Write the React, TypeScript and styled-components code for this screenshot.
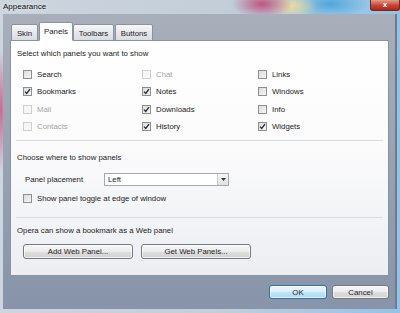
import React from "react";
import styled, { createGlobalStyle } from "styled-components";

const GlobalStyle = createGlobalStyle`
  html, body {
    margin: 0;
    padding: 0;
  }
  body {
    font-family: "Liberation Sans", Arial, sans-serif;
    font-size: 7.8px;
    color: #1b1b1b;
  }
`;

const Desktop = styled.div`
  width: 400px;
  height: 313px;
  overflow: hidden;
  padding-left: 3px;
  box-sizing: border-box;
  background:
    radial-gradient(ellipse 30px 14px at 262px 4px, #c2557e 0%, rgba(194, 85, 126, 0) 100%),
    radial-gradient(ellipse 26px 12px at 292px 6px, #e7dc9c 0%, rgba(231, 220, 156, 0) 100%),
    radial-gradient(ellipse 40px 14px at 330px 4px, #4fa6de 0%, rgba(79, 166, 222, 0) 100%),
    radial-gradient(ellipse 8px 60px at 1px 110px, #c76a8c 0%, rgba(199, 106, 140, 0) 100%),
    linear-gradient(90deg, #cdd5de 0%, #c3ced9 55%, #8fc4e8 100%);
`;

const Dialog = styled.div`
  width: 394px;
  display: flex;
  flex-direction: column;
`;

const TitleBar = styled.div`
  height: 14px;
  display: flex;
  align-items: flex-start;
  justify-content: space-between;
`;

const Title = styled.span`
  font-size: 8px;
  line-height: 13px;
  color: #111;
  text-shadow: 0 0 4px rgba(255, 255, 255, 0.9);
`;

const CloseButton = styled.div`
  width: 28px;
  height: 10px;
  margin-right: -3px;
  border: 1px solid #6b2a22;
  border-top: none;
  border-radius: 0 0 3px 3px;
  background: linear-gradient(#e59a8a, #c8432f 55%, #a9261a);
  display: flex;
  align-items: center;
  justify-content: center;
  color: #fff;
  font-size: 8px;
  font-weight: bold;
  line-height: 1;
`;

const Frame = styled.div`
  height: 295px;
  box-sizing: border-box;
  padding: 9px 6px 0 0;
  background: linear-gradient(#a8afba, #97a2b3 50%, #8794a9);
  border-right: 2px solid #6c7a92;
  display: flex;
  flex-direction: column;
`;

const TabRow = styled.div`
  display: flex;
  align-items: flex-end;
  padding-left: 8px;
  height: 18px;
  margin-bottom: -1px;
  position: relative;
  z-index: 1;
`;

const Tab = styled.div<{ $active?: boolean; $w: number }>`
  box-sizing: border-box;
  width: ${(p) => p.$w}px;
  height: ${(p) => (p.$active ? 19 : 17)}px;
  margin-right: ${(p) => (p.$active ? 0 : 1)}px;
  border: 1px solid #8a93a1;
  border-bottom-color: ${(p) => (p.$active ? "#fff" : "#8a93a1")};
  border-radius: 2px 2px 0 0;
  background: ${(p) =>
    p.$active ? "#fff" : "linear-gradient(#f7f7f7, #e6e8ec 50%, #d9dde3)"};
  display: flex;
  align-items: center;
  justify-content: center;
  padding-top: ${(p) => (p.$active ? 0 : 1)}px;
`;

const Panel = styled.div`
  box-sizing: border-box;
  margin-left: 7px;
  width: 379px;
  height: 236px;
  border: 1px solid #8a93a1;
  background: linear-gradient(#ffffff 0%, #fbfbfc 45%, #eceef2 100%);
  display: flex;
  flex-direction: column;
`;

const Heading = styled.div<{ $top: number }>`
  margin: ${(p) => p.$top}px 0 0 6px;
  height: 12px;
  line-height: 12px;
`;

const CheckGrid = styled.div`
  margin: 6px 0 0 12px;
  display: grid;
  grid-template-columns: 119px 116px 1fr;
  grid-auto-rows: 17.33px;
`;

const CheckItem = styled.label<{ $disabled?: boolean }>`
  display: flex;
  align-items: center;
  gap: 5px;
  color: ${(p) => (p.$disabled ? "#a3a3a3" : "#1b1b1b")};
`;

const Box = styled.span<{ $disabled?: boolean }>`
  box-sizing: border-box;
  width: 9px;
  height: 9px;
  flex: none;
  border: 1px solid ${(p) => (p.$disabled ? "#cfcfcf" : "#8e8f8f")};
  background: ${(p) =>
    p.$disabled ? "#f6f6f6" : "linear-gradient(135deg, #dcdcdc, #f6f6f6)"};
  display: flex;
  align-items: center;
  justify-content: center;
`;

const Separator = styled.div<{ $top: number }>`
  margin: ${(p) => p.$top}px 5px 0 5px;
  height: 1px;
  background: #d8dbe0;
`;

const PlacementRow = styled.div`
  margin: 9px 0 0 14px;
  height: 13px;
  display: flex;
  align-items: center;
`;

const FieldLabel = styled.span`
  width: 79px;
`;

const Select = styled.div`
  box-sizing: border-box;
  width: 125px;
  height: 13px;
  border: 1px solid #a6a9ad;
  background: #fff;
  display: flex;
  align-items: center;
`;

const SelectValue = styled.span`
  flex: 1;
  padding-left: 3px;
`;

const SelectArrow = styled.span`
  width: 10px;
  height: 11px;
  border-left: 1px solid #c6c9cd;
  background: linear-gradient(#f6f6f6, #dfe1e4);
  display: flex;
  align-items: center;
  justify-content: center;
`;

const ToggleRow = styled.div`
  margin: 4px 0 0 12px;
  height: 17px;
  display: flex;
`;

const ButtonRow = styled.div<{ $top: number; $left: number; $gap: number; $end?: boolean }>`
  margin: ${(p) => p.$top}px 0 0 ${(p) => p.$left}px;
  display: flex;
  gap: ${(p) => p.$gap}px;
  justify-content: ${(p) => (p.$end ? "flex-end" : "flex-start")};
`;

const Button = styled.div<{ $w: number; $h: number; $default?: boolean }>`
  box-sizing: border-box;
  width: ${(p) => p.$w}px;
  height: ${(p) => p.$h}px;
  border: 1px solid ${(p) => (p.$default ? "#3c6fa0" : "#767a80")};
  border-radius: 3px;
  background: ${(p) =>
    p.$default
      ? "linear-gradient(#eaf6fd 0%, #d9f0fc 50%, #bee6fd 51%, #a7d9f5 100%)"
      : "linear-gradient(#f6f6f6 0%, #ececec 50%, #dedede 51%, #d2d2d2 100%)"};
  box-shadow: inset 0 0 0 1px rgba(255, 255, 255, 0.7);
  display: flex;
  align-items: center;
  justify-content: center;
  color: #1b1b1b;
`;

const CheckMark = () => (
  <svg width="7" height="7" viewBox="0 0 7 7">
    <path d="M1 3.6 L2.7 5.4 L6 1.2" fill="none" stroke="#1f2a36" strokeWidth="1.3" />
  </svg>
);

type Item = { label: string; checked?: boolean; disabled?: boolean };

const panels: Item[] = [
  { label: "Search" },
  { label: "Chat", disabled: true },
  { label: "Links" },
  { label: "Bookmarks", checked: true },
  { label: "Notes", checked: true },
  { label: "Windows" },
  { label: "Mail", disabled: true },
  { label: "Downloads", checked: true },
  { label: "Info" },
  { label: "Contacts", disabled: true },
  { label: "History", checked: true },
  { label: "Widgets", checked: true },
];

function Check({ label, checked, disabled }: Item) {
  return (
    <CheckItem $disabled={disabled}>
      <Box $disabled={disabled}>{checked && <CheckMark />}</Box>
      {label}
    </CheckItem>
  );
}

export default function App() {
  return (
    <Desktop>
      <GlobalStyle />
      <Dialog>
        <TitleBar>
          <Title>Appearance</Title>
          <CloseButton>x</CloseButton>
        </TitleBar>
        <Frame>
          <TabRow>
            <Tab $w={27}>Skin</Tab>
            <Tab $w={34} $active>
              Panels
            </Tab>
            <Tab $w={41}>Toolbars</Tab>
            <Tab $w={38}>Buttons</Tab>
          </TabRow>
          <Panel>
            <Heading $top={7}>Select which panels you want to show</Heading>
            <CheckGrid>
              {panels.map((p) => (
                <Check key={p.label} {...p} />
              ))}
            </CheckGrid>
            <Separator $top={5} />
            <Heading $top={11}>Choose where to show panels</Heading>
            <PlacementRow>
              <FieldLabel>Panel placement</FieldLabel>
              <Select>
                <SelectValue>Left</SelectValue>
                <SelectArrow>
                  <svg width="5" height="3" viewBox="0 0 5 3">
                    <path d="M0 0 H5 L2.5 3 Z" fill="#333" />
                  </svg>
                </SelectArrow>
              </Select>
            </PlacementRow>
            <ToggleRow>
              <Check label="Show panel toggle at edge of window" />
            </ToggleRow>
            <Separator $top={10} />
            <Heading $top={7}>Opera can show a bookmark as a Web panel</Heading>
            <ButtonRow $top={7} $left={12} $gap={8}>
              <Button $w={110} $h={15}>Add Web Panel...</Button>
              <Button $w={110} $h={15}>Get Web Panels...</Button>
            </ButtonRow>
          </Panel>
          <ButtonRow $top={9} $left={0} $gap={5} $end>
            <Button $w={58} $h={14} $default>
              OK
            </Button>
            <Button $w={57} $h={14}>Cancel</Button>
          </ButtonRow>
        </Frame>
      </Dialog>
    </Desktop>
  );
}
